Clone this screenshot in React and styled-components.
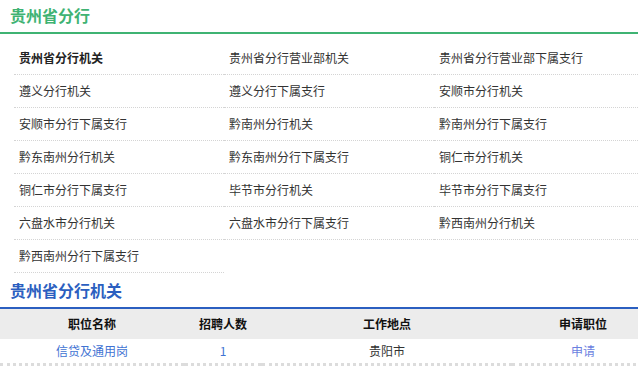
import React from "react";
import styled, { createGlobalStyle } from "styled-components";

const Global = createGlobalStyle`
  html, body { margin: 0; padding: 0; background: #fff; overflow: hidden; }
  body { font-family: "Noto Sans CJK SC", "Noto Sans", sans-serif; font-size: 12px; color: #333; }
`;

const Page = styled.div`
  width: 654px;
`;

const SectionTitle = styled.h2`
  margin: 0;
  padding-left: 10px;
  height: ${(p) => p.$h}px;
  line-height: ${(p) => p.$lh}px;
  font-size: 16px;
  font-weight: bold;
  color: ${(p) => p.$color};
  border-bottom: 2px solid ${(p) => p.$color};
`;

const BranchGrid = styled.ul`
  list-style: none;
  margin: 8px 0 0 14px;
  padding: 0;
  display: grid;
  grid-template-columns: repeat(3, 210px);
`;

const BranchItem = styled.li`
  height: 32px;
  line-height: 32px;
  padding-left: 5px;
  border-bottom: 1px dotted #d4d4d4;
  font-weight: ${(p) => (p.$active ? "bold" : "normal")};
  color: ${(p) => (p.$active ? "#222" : "#333")};
  white-space: nowrap;
`;

const Table = styled.div`
  display: grid;
  grid-template-columns: 184px 78px 250px 142px;
`;

const HeadCell = styled.div`
  background: #ececec;
  height: 30px;
  line-height: 30px;
  text-align: center;
  font-weight: bold;
  color: #111;
`;

const Cell = styled.div`
  height: 24px;
  line-height: 24px;
  text-align: center;
  color: ${(p) => p.$color || "#333"};
  border-bottom: 3px dotted #dcdcdc;
`;

const branches = [
  "贵州省分行机关",
  "贵州省分行营业部机关",
  "贵州省分行营业部下属支行",
  "遵义分行机关",
  "遵义分行下属支行",
  "安顺市分行机关",
  "安顺市分行下属支行",
  "黔南州分行机关",
  "黔南州分行下属支行",
  "黔东南州分行机关",
  "黔东南州分行下属支行",
  "铜仁市分行机关",
  "铜仁市分行下属支行",
  "毕节市分行机关",
  "毕节市分行下属支行",
  "六盘水市分行机关",
  "六盘水市分行下属支行",
  "黔西南州分行机关",
  "黔西南州分行下属支行",
];

export default function App() {
  return (
    <Page>
      <Global />
      <SectionTitle $color="#3fb373" $h={32} $lh={30}>贵州省分行</SectionTitle>
      <BranchGrid>
        {branches.map((b, i) => (
          <BranchItem key={b} $active={i === 0}>{b}</BranchItem>
        ))}
      </BranchGrid>
      <SectionTitle $color="#2b5fc0" $h={34} $lh={34}>贵州省分行机关</SectionTitle>
      <Table>
        <HeadCell>职位名称</HeadCell>
        <HeadCell>招聘人数</HeadCell>
        <HeadCell>工作地点</HeadCell>
        <HeadCell>申请职位</HeadCell>
        <Cell $color="#3f73d3">信贷及通用岗</Cell>
        <Cell $color="#3f73d3">1</Cell>
        <Cell>贵阳市</Cell>
        <Cell $color="#6b7fe0">申请</Cell>
      </Table>
    </Page>
  );
}
